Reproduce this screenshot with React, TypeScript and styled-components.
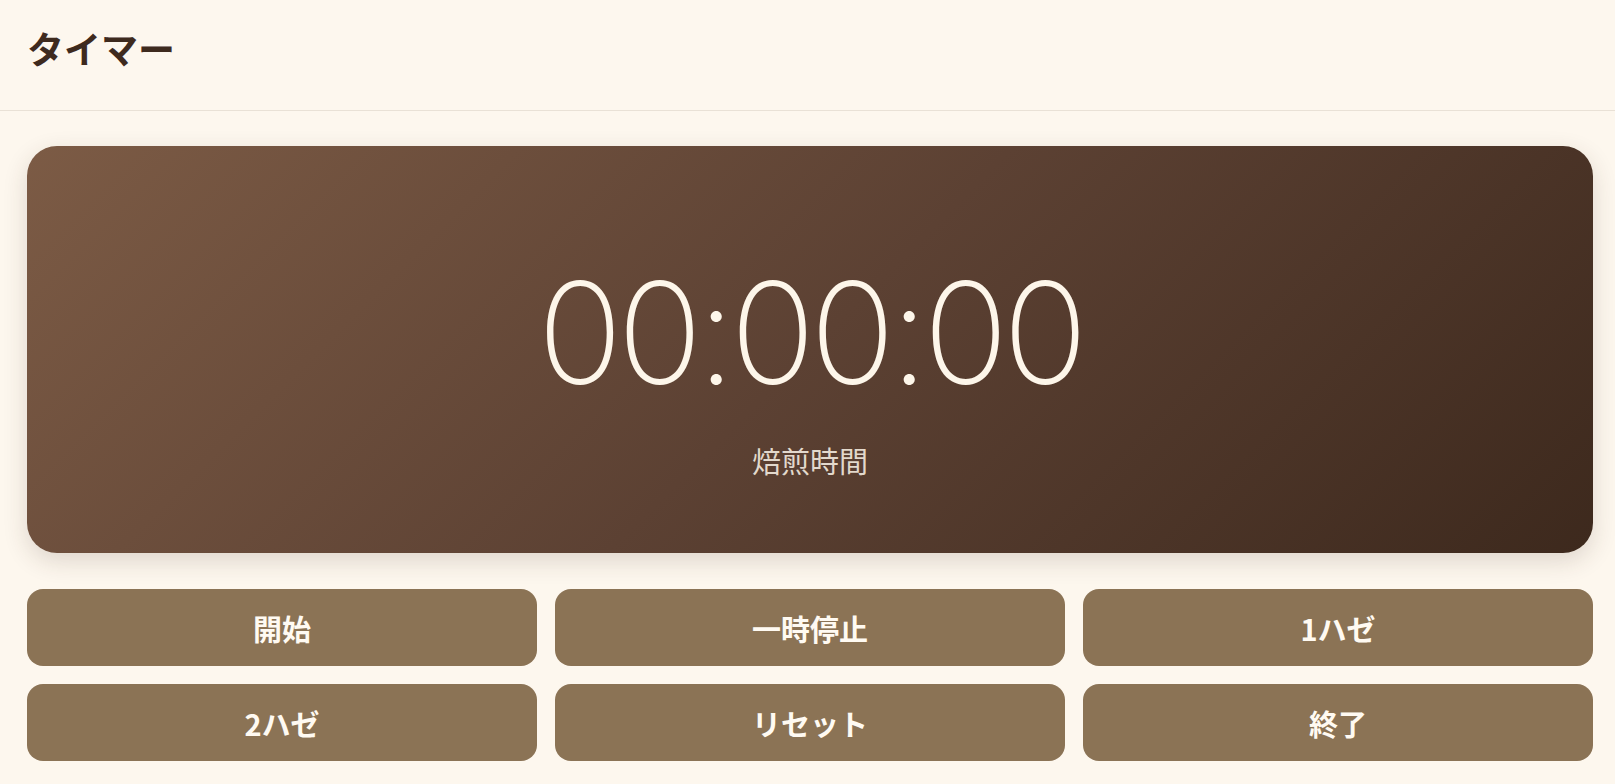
import React from "react";
import styled, { createGlobalStyle } from "styled-components";

const GlobalStyle = createGlobalStyle`
  html, body {
    margin: 0;
    padding: 0;
    background: #fdf7ee;
  }
  body {
    font-family: "Noto Sans CJK JP", "Noto Sans", sans-serif;
    color: #3e2a1e;
  }
`;

const Page = styled.div`
  min-height: 100vh;
  background: #fdf7ee;
`;

const Header = styled.header`
  padding: 22px 27px 36px;
  border-bottom: 1px solid #e9e1d6;
`;

const Title = styled.h1`
  margin: 0;
  font-size: 37px;
  font-weight: 700;
  line-height: 52px;
  color: #3e2a1e;
`;

const Main = styled.main`
  display: flex;
  flex-direction: column;
  gap: 36px;
  padding: 35px 22px 0 27px;
`;

const TimerCard = styled.section`
  height: 407px;
  box-sizing: border-box;
  border-radius: 30px;
  background: linear-gradient(135deg, #7c5b45 0%, #5c4133 50%, #3d291d 100%);
  box-shadow: 0 8px 24px rgba(62, 42, 30, 0.16);
  display: flex;
  flex-direction: column;
  align-items: center;
  padding-top: 99px;
  color: #fdf6ea;
`;

const Clock = styled.div`
  font-family: Inter, Roboto, sans-serif;
  font-weight: 180;
  font-size: 141px;
  line-height: 175px;
  letter-spacing: -5.5px;
  color: #fdf6ea;
`;

const Caption = styled.div`
  margin-top: 19px;
  font-size: 29px;
  line-height: 42px;
  color: rgba(253, 246, 234, 0.85);
`;

const Controls = styled.div`
  display: grid;
  grid-template-columns: repeat(3, 1fr);
  column-gap: 18px;
  row-gap: 18px;
`;

const ControlButton = styled.button`
  height: 77px;
  border: none;
  border-radius: 16px;
  background: #8b7355;
  color: #fffaf2;
  font-family: "Noto Sans CJK JP", "Noto Sans", sans-serif;
  font-size: 29px;
  font-weight: 700;
  cursor: pointer;
`;

const buttons = ["開始", "一時停止", "1ハゼ", "2ハゼ", "リセット", "終了"];

export default function App() {
  return (
    <Page>
      <GlobalStyle />
      <Header>
        <Title>タイマー</Title>
      </Header>
      <Main>
        <TimerCard>
          <Clock>00:00:00</Clock>
          <Caption>焙煎時間</Caption>
        </TimerCard>
        <Controls>
          {buttons.map((label) => (
            <ControlButton key={label}>{label}</ControlButton>
          ))}
        </Controls>
      </Main>
    </Page>
  );
}
